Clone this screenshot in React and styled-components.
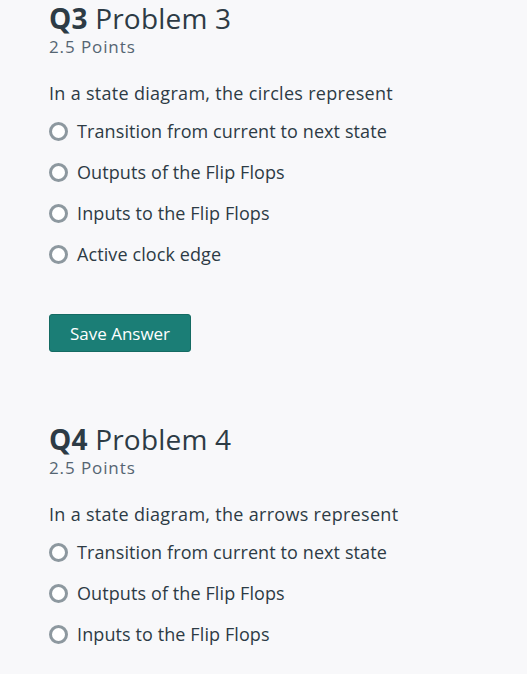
import React from "react";
import styled, { createGlobalStyle } from "styled-components";

const GlobalStyle = createGlobalStyle`
  body {
    margin: 0;
    background: #f8f8fa;
    font-family: "Open Sans", "Noto Sans", sans-serif;
    color: #2d3b45;
  }
`;

const Page = styled.div`
  display: flex;
  flex-direction: column;
  padding: 0 20px 0 49px;
  margin-top: 1px;
`;

const Question = styled.div`
  display: flex;
  flex-direction: column;
  margin-bottom: ${(p) => (p.last ? "0" : "70px")};
`;

const Title = styled.h2`
  margin: 0;
  font-size: 28px;
  font-weight: 400;
  letter-spacing: 0.2px;
  line-height: 34px;
  color: #2d3b45;

  b {
    font-weight: 700;
  }
`;

const Points = styled.div`
  margin-top: 1px;
  font-size: 17px;
  letter-spacing: 0.9px;
  line-height: 22px;
  color: #556572;
`;

const Text = styled.p`
  margin: 23px 0 14px;
  font-size: 18px;
  letter-spacing: 0.3px;
  line-height: 24px;
`;

const Options = styled.div`
  display: flex;
  flex-direction: column;
  gap: 17px;
`;

const Option = styled.label`
  display: flex;
  align-items: center;
  gap: 9px;
  font-size: 18px;
  letter-spacing: 0.1px;
  line-height: 24px;
`;

const Radio = styled.span`
  width: 19px;
  height: 19px;
  box-sizing: border-box;
  border: 3px solid #8d989f;
  border-radius: 50%;
  background: #fff;
  flex-shrink: 0;
`;

const SaveButton = styled.button`
  align-self: flex-start;
  margin-top: 48px;
  width: 142px;
  height: 38px;
  background: #1b7e76;
  border: 1px solid #156b63;
  border-radius: 3px;
  color: #fff;
  font-family: inherit;
  font-size: 17px;
`;

const questions = [
  {
    num: "Q3",
    title: "Problem 3",
    text: "In a state diagram, the circles represent",
    options: [
      "Transition from current to next state",
      "Outputs of the Flip Flops",
      "Inputs to the Flip Flops",
      "Active clock edge",
    ],
    save: true,
  },
  {
    num: "Q4",
    title: "Problem 4",
    text: "In a state diagram, the arrows represent",
    options: [
      "Transition from current to next state",
      "Outputs of the Flip Flops",
      "Inputs to the Flip Flops",
    ],
  },
];

const App = () => {
  return (
    <>
      <GlobalStyle />
      <Page>
        {questions.map((q, i) => (
          <Question key={q.num} last={i === questions.length - 1}>
            <Title>
              <b>{q.num}</b> {q.title}
            </Title>
            <Points>2.5 Points</Points>
            <Text>{q.text}</Text>
            <Options>
              {q.options.map((o) => (
                <Option key={o}>
                  <Radio />
                  {o}
                </Option>
              ))}
            </Options>
            {q.save && <SaveButton>Save Answer</SaveButton>}
          </Question>
        ))}
      </Page>
    </>
  );
};

export default App;
